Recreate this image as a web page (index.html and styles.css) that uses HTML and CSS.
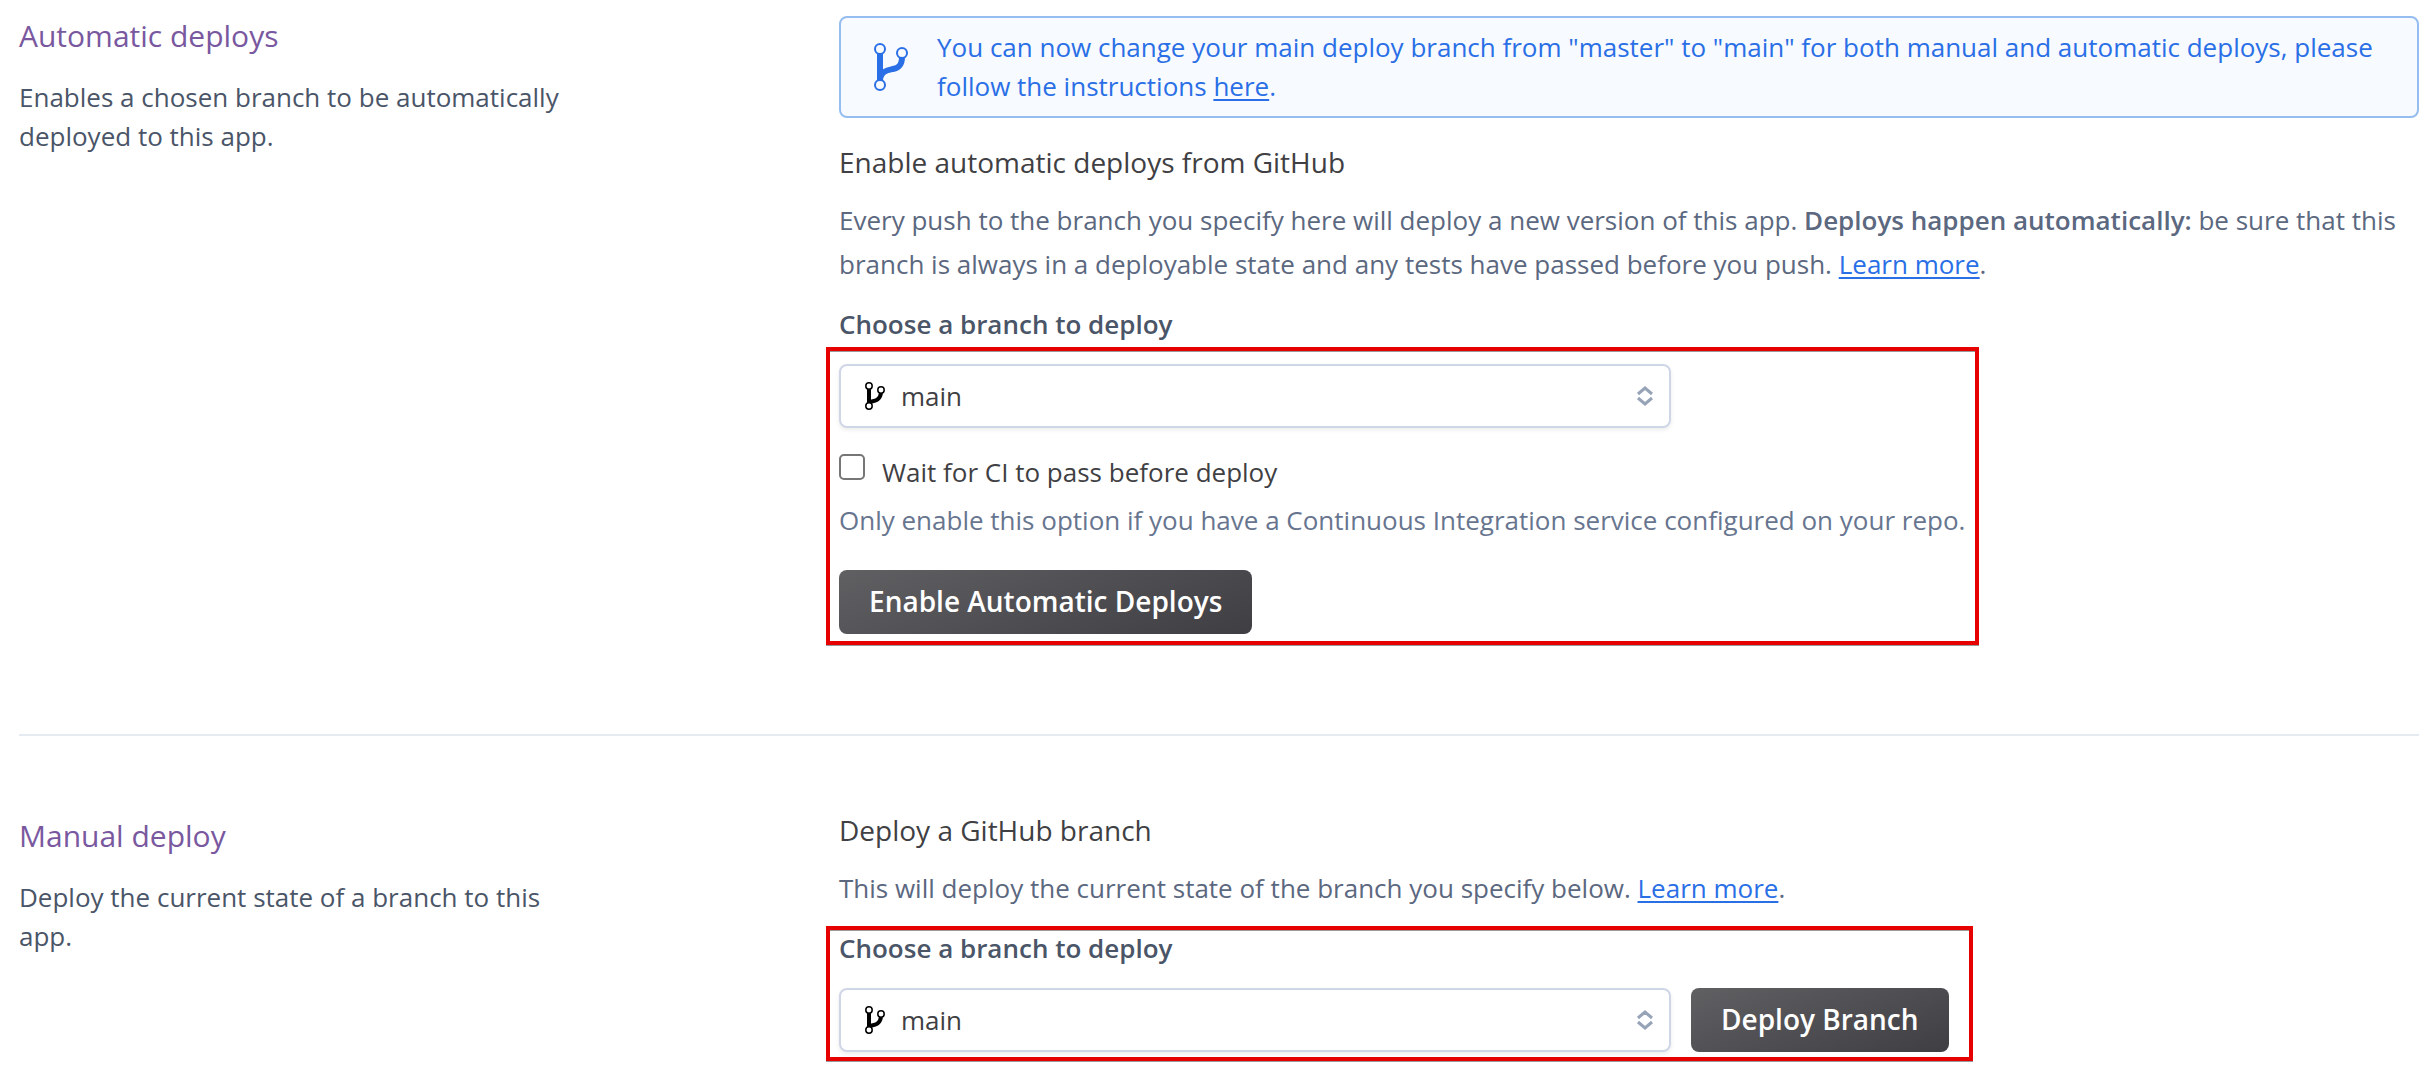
FILE: index.html
```html
<!DOCTYPE html>
<html lang="en">
<head>
  <meta charset="utf-8">
  <meta name="viewport" content="width=device-width, initial-scale=1">
  <title>Deploy settings</title>
  <link rel="stylesheet" href="styles.css">
</head>
<body>
  <main class="page">
    <section class="section">
      <div class="section-intro">
        <h2 class="section-title">Automatic deploys</h2>
        <p class="section-text">Enables a chosen branch to be automatically deployed to this app.</p>
      </div>
      <div class="section-body">
        <div class="notice">
          <svg class="notice-icon" viewBox="0 0 34 48" aria-hidden="true">
            <path d="M6 10v28M28 14c0 9-4 11-9 12S6 28 6 38" fill="none" stroke="currentColor" stroke-width="6"/>
            <g class="notice-nodes" stroke="currentColor" stroke-width="2">
              <circle cx="6" cy="6" r="5"/><circle cx="28" cy="10" r="5"/><circle cx="6" cy="42" r="5"/>
            </g>
          </svg>
          <p class="notice-text">You can now change your main deploy branch from "master" to "main" for both manual and automatic deploys, please follow the instructions <a class="link" href="#instructions">here</a>.</p>
        </div>
        <h3 class="heading">Enable automatic deploys from GitHub</h3>
        <p class="description">Every push to the branch you specify here will deploy a new version of this app. <strong>Deploys happen automatically:</strong> be sure that this branch is always in a deployable state and any tests have passed before you push. <a class="link" href="#automatic">Learn more</a>.</p>
        <label class="field-label" for="auto-branch">Choose a branch to deploy</label>
        <div class="highlight highlight-automatic">
          <div class="picker">
            <select class="picker-select" id="auto-branch"><option>main</option></select>
            <svg class="picker-branch" viewBox="0 0 20 28" aria-hidden="true">
              <path d="M4 7v14M16 11c-1 6-4 8-12 9" fill="none" stroke="#000" stroke-width="4"/>
              <g fill="#fff" stroke="#000" stroke-width="1.5">
                <circle cx="4" cy="4" r="3.2"/><circle cx="16" cy="8" r="3.2"/><circle cx="4" cy="24" r="3.2"/>
              </g>
            </svg>
            <svg class="picker-arrows" viewBox="0 0 16 20" aria-hidden="true">
              <path d="M1 8l7-6 7 6M1 12l7 6 7-6" fill="none" stroke="currentColor" stroke-width="3"/>
            </svg>
          </div>
          <div class="check-row">
            <input class="check" type="checkbox" id="wait-ci">
            <label for="wait-ci">Wait for CI to pass before deploy</label>
          </div>
          <p class="help">Only enable this option if you have a Continuous Integration service configured on your repo.</p>
          <button class="button" type="button">Enable Automatic Deploys</button>
        </div>
      </div>
    </section>

    <section class="section section-manual">
      <div class="section-intro">
        <h2 class="section-title">Manual deploy</h2>
        <p class="section-text">Deploy the current state of a branch to this app.</p>
      </div>
      <div class="section-body">
        <h3 class="heading">Deploy a GitHub branch</h3>
        <p class="description">This will deploy the current state of the branch you specify below. <a class="link" href="#manual">Learn more</a>.</p>
        <div class="highlight highlight-manual">
          <label class="field-label" for="manual-branch">Choose a branch to deploy</label>
          <div class="deploy-row">
            <div class="picker">
              <select class="picker-select" id="manual-branch"><option>main</option></select>
              <svg class="picker-branch" viewBox="0 0 20 28" aria-hidden="true">
                <path d="M4 7v14M16 11c-1 6-4 8-12 9" fill="none" stroke="#000" stroke-width="4"/>
                <g fill="#fff" stroke="#000" stroke-width="1.5">
                  <circle cx="4" cy="4" r="3.2"/><circle cx="16" cy="8" r="3.2"/><circle cx="4" cy="24" r="3.2"/>
                </g>
              </svg>
              <svg class="picker-arrows" viewBox="0 0 16 20" aria-hidden="true">
                <path d="M1 8l7-6 7 6M1 12l7 6 7-6" fill="none" stroke="currentColor" stroke-width="3"/>
              </svg>
            </div>
            <button class="button" type="button">Deploy Branch</button>
          </div>
        </div>
      </div>
    </section>
  </main>
</body>
</html>
```
FILE: styles.css
```css
* {
  box-sizing: border-box;
}

body {
  margin: 0;
  background: #fff;
  color: #3f3f44;
  font: 26px/39px "Open Sans", "Noto Sans", sans-serif;
}

h2, h3, p {
  margin: 0;
  font-weight: 400;
}

.page {
  padding: 15px 15px 13px 19px;
}

/* Sections: intro on the left, controls on the right */
.section {
  display: grid;
  grid-template-columns: 1fr 2fr;
  gap: 30px;
  padding-bottom: 100px;
}

.section-body {
  padding-top: 1px;
}

.section-manual {
  padding: 73px 0 0;
  border-top: 2px solid #e6ebf1;
}

.section-manual .section-intro {
  padding-top: 6px;
}

.section-manual .section-body {
  padding-top: 0;
}

.section-title {
  margin-bottom: 21px;
  color: #79589f;
  font-size: 30px;
  line-height: 42px;
}

.section-text {
  max-width: 560px;
  color: #4a5568;
}

/* Notice */
.notice {
  display: flex;
  align-items: center;
  gap: 29px;
  margin-bottom: 23px;
  padding: 10px 33px;
  border: 2px solid #96bdf0;
  border-radius: 8px;
  background: #f7faff;
  color: #2a6fe6;
}

.notice-icon {
  flex: none;
  width: 34px;
  height: 48px;
}

.notice-nodes {
  fill: #f7faff;
}

.link {
  color: #2a6fe6;
  text-decoration-thickness: 2px;
  text-underline-offset: 3px;
}

/* Text */
.heading {
  margin-bottom: 15px;
  font-size: 28px;
  line-height: 42px;
}

.description {
  margin-bottom: 19px;
  color: #5b6880;
  line-height: 44px;
}

.description strong {
  font-weight: 600;
}

.field-label {
  display: block;
  margin-bottom: 20px;
  color: #4a5568;
  font-weight: 600;
}

.help {
  margin: 9px 0 30px;
  color: #67758f;
}

/* Red callout frames */
.highlight {
  position: relative;
  width: fit-content;
}

.highlight::after {
  content: "";
  position: absolute;
  border: 4px solid #e60000;
  box-shadow: 0 1px 0 #999, inset 0 1px 0 #999;
  pointer-events: none;
}

.highlight-automatic::after {
  inset: -17px -14px -11px -13px;
}

.highlight-manual::after {
  inset: -3px -24px -9px -13px;
}

/* Branch picker */
.picker {
  position: relative;
  width: 832px;
  max-width: 100%;
}

.picker-select {
  display: block;
  width: 100%;
  height: 64px;
  padding: 0 60px;
  border: 2px solid #cfd7e6;
  border-radius: 8px;
  background: #fff;
  box-shadow: 0 2px 4px rgba(0, 0, 0, 0.08);
  color: inherit;
  font: inherit;
  appearance: none;
}

.picker-branch,
.picker-arrows {
  position: absolute;
  pointer-events: none;
}

.picker-branch {
  top: 18px;
  left: 26px;
  width: 20px;
  height: 28px;
}

.picker-arrows {
  top: 22px;
  right: 18px;
  width: 16px;
  height: 20px;
  color: #97a3b6;
}

.check-row {
  display: flex;
  align-items: flex-start;
  gap: 17px;
  margin-top: 25px;
}

.check {
  flex: none;
  width: 26px;
  height: 26px;
  margin: 1px 0 0;
  border: 2px solid #767676;
  border-radius: 5px;
  background: #fff;
  appearance: none;
}

.check:checked {
  background: #2a6fe6;
}

.deploy-row {
  display: flex;
  gap: 20px;
}

.button {
  height: 64px;
  padding: 0 30px 2px;
  border: 0;
  border-radius: 8px;
  background: linear-gradient(160deg, #606063, #3f3e43);
  color: #fff;
  font: 600 28px/42px "Open Sans", "Noto Sans", sans-serif;
}
```
